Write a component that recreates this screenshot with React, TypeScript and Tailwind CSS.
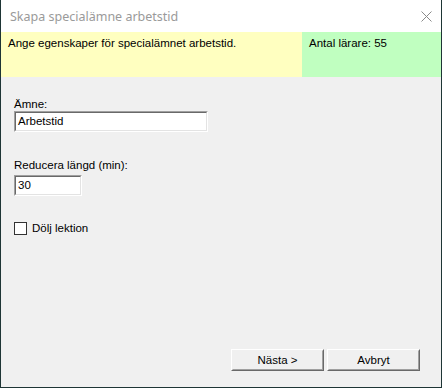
import React, { useState } from 'react';

// Windows-style dialog: "Skapa specialämne arbetstid"

const sunkenOuter = 'border border-t-[#a0a0a0] border-l-[#a0a0a0] border-b-white border-r-white';
const sunkenInner = 'border border-t-[#696969] border-l-[#696969] border-b-[#e3e3e3] border-r-[#e3e3e3]';

const Field: React.FC<{ value: string; width: string }> = ({ value, width }) => (
  <div className={sunkenOuter + ' ' + width + ' h-[21px]'}>
    <div className={sunkenInner + ' h-full bg-white pl-[2px] flex items-center text-black'}>
      {value}
    </div>
  </div>
);

const DialogButton: React.FC<{ label: string }> = ({ label }) => (
  <button className="w-[93px] h-[22px] border border-t-white border-l-white border-b-[#696969] border-r-[#696969] bg-[#f0f0f0]">
    <div className="h-full border border-t-transparent border-l-transparent border-b-[#a0a0a0] border-r-[#a0a0a0] flex items-center justify-center text-black">
      {label}
    </div>
  </button>
);

export default function App() {
  const [hide, setHide] = useState(false);

  return (
    <div
      className="w-[442px] h-[388px] flex flex-col bg-[#f0f0f0] border-l border-r border-b border-[#1e3535] text-[11.5px] leading-[13px]"
      style={{ fontFamily: '"Liberation Sans", Arial, sans-serif' }}
    >
      {/* Title bar */}
      <div className="h-[32px] bg-white flex items-center justify-between pl-[9px] pr-[9px]">
        <span className="text-[12.5px] text-[#9a9a9a]" style={{ fontFamily: '"Noto Sans", sans-serif' }}>
          Skapa specialämne arbetstid
        </span>
        <svg width="11" height="11" viewBox="0 0 11 11" className="mt-[1px]">
          <path d="M0.5 0.5 L10.5 10.5 M10.5 0.5 L0.5 10.5" stroke="#8a8a8a" strokeWidth="1" fill="none" />
        </svg>
      </div>

      {/* Info band */}
      <div className="h-[45px] flex text-black">
        <div className="flex-1 bg-[#ffffc0] pl-[7px] pt-[5px]">Ange egenskaper för specialämnet arbetstid.</div>
        <div className="w-[139px] bg-[#c0ffc0] pl-[7px] pt-[5px]">Antal lärare: 55</div>
      </div>

      {/* Body */}
      <div className="flex-1 flex flex-col pl-[13px] text-black">
        <div className="mt-[21px]">Ämne:</div>
        <div className="mt-[0px]">
          <Field value="Arbetstid" width="w-[194px]" />
        </div>

        <div className="mt-[27px]">Reducera längd (min):</div>
        <div className="mt-[3px]">
          <Field value="30" width="w-[68px]" />
        </div>

        <label className="mt-[26px] flex items-center gap-[5px] cursor-default">
          <span
            onClick={() => setHide(!hide)}
            className="w-[13px] h-[13px] border border-[#333333] bg-white flex items-center justify-center"
          >
            {hide && (
              <svg width="9" height="9" viewBox="0 0 9 9">
                <path d="M1 4.5 L3.5 7 L8 1.5" stroke="#000" strokeWidth="1.5" fill="none" />
              </svg>
            )}
          </span>
          <span>Dölj lektion</span>
        </label>

        <div className="mt-auto flex justify-end gap-[3px] pr-[21px] pb-[16px]">
          <DialogButton label="Nästa >" />
          <DialogButton label="Avbryt" />
        </div>
      </div>
    </div>
  );
}
